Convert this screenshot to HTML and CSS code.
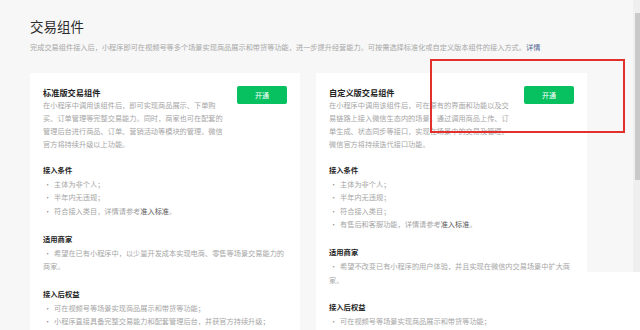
FILE: index.html
```html
<!DOCTYPE html>
<html lang="zh-CN">
<head>
  <meta charset="UTF-8" />
  <meta name="viewport" content="width=device-width, initial-scale=1.0"/>
  <title>交易组件</title>
  <link rel="stylesheet" href="styles.css">
</head>
<body>
  <div class="page">
    <h1 class="title">交易组件</h1>
    <p class="intro">完成交易组件接入后，小程序即可在视频号等多个场景实现商品展示和带货等功能，进一步提升经营能力。可按需选择标准化或自定义版本组件的接入方式。<a class="link">详情</a></p>

    <div class="cards">
      <div class="card">
        <div class="card-head">
          <div>
            <h2 class="card-title">标准版交易组件</h2>
            <p class="card-desc">在小程序中调用该组件后，即可实现商品展示、下单购买、订单管理等完整交易能力。同时，商家也可在配套的管理后台进行商品、订单、营销活动等模块的管理。微信官方将持续升级以上功能。</p>
          </div>
          <button class="btn">开通</button>
        </div>
        <div class="section">
          <h3>接入条件</h3>
          <ul>
            <li>主体为非个人；</li>
            <li>半年内无违规；</li>
            <li>符合接入类目，详情请参考<a class="link-dark">准入标准</a>。</li>
          </ul>
        </div>
        <div class="section">
          <h3>适用商家</h3>
          <ul>
            <li>希望在已有小程序中，以少量开发成本实现电商、零售等场景交易能力的商家。</li>
          </ul>
        </div>
        <div class="section">
          <h3>接入后权益</h3>
          <ul>
            <li>可在视频号等场景实现商品展示和带货等功能；</li>
            <li>小程序直接具备完整交易能力和配套管理后台，并获官方持续升级；</li>
            <li>可通过交易组件获得平台提供的营销和流量支持。</li>
          </ul>
        </div>
      </div>

      <div class="card">
        <div class="card-head">
          <div>
            <h2 class="card-title">自定义版交易组件</h2>
            <p class="card-desc">在小程序中调用该组件后，可在原有的界面和功能以及交易链路上接入微信生态内的场景，通过调用商品上传、订单生成、状态同步等接口，实现在场景中的交易及管理。微信官方将持续迭代接口功能。</p>
          </div>
          <button class="btn">开通</button>
        </div>
        <div class="section">
          <h3>接入条件</h3>
          <ul>
            <li>主体为非个人；</li>
            <li>半年内无违规；</li>
            <li>符合接入类目；</li>
            <li>有售后和客服功能，详情请参考<a class="link-dark">准入标准</a>。</li>
          </ul>
        </div>
        <div class="section">
          <h3>适用商家</h3>
          <ul>
            <li>希望不改变已有小程序的用户体验，并且实现在微信内交易场景中扩大商家。</li>
          </ul>
        </div>
        <div class="section">
          <h3>接入后权益</h3>
          <ul>
            <li>可在视频号等场景实现商品展示和带货等功能；</li>
            <li>保留原有小程序交易链路，接入后即可获得场景能力。</li>
          </ul>
        </div>
      </div>
    </div>
  </div>

  <div class="highlight"></div>
  <div class="corner"></div>
  <div class="scrollbar"><div class="thumb"></div></div>
</body>
</html>
```

FILE: styles.css
```css
html, body { margin: 0; padding: 0; height: 100%; overflow: hidden; }
body { background: #f7f7f7; font-family: "Noto Sans CJK SC", "Noto Sans", sans-serif; color: #333; }

.page { padding: 17px 30px 0 30px; }
.title { margin: 0; font-size: 13.5px; line-height: 18px; font-weight: 400; color: #2b2b2b; }
.intro { margin: 6px 0 0; font-size: 7.2px; line-height: 12px; color: #a8a8a8; white-space: nowrap; }
.link { color: #576b95; }
.link-dark { color: #555; }

.cards { display: grid; grid-template-columns: 270px 271px; gap: 16px; margin-top: 20px; }
.card { background: #fff; padding: 13px 13px 20px; height: 300px; }

.card-head { display: flex; justify-content: space-between; align-items: flex-start; }
.card-title { margin: 0; font-size: 8.2px; line-height: 13px; font-weight: 700; color: #222; }
.card-desc { margin: 0; width: 181px; font-size: 7.2px; line-height: 13px; color: #a6a6a6; }
.btn { width: 50px; height: 18px; border: none; border-radius: 2px; background: #07c160; color: #fff; font-family: inherit; font-size: 7px; padding: 0; }

.section { margin-top: 12px; }
.section + .section { margin-top: 13.5px; }
.section h3 { margin: 0; font-size: 7.3px; line-height: 15px; font-weight: 700; color: #222; }
.section ul { margin: 0; padding: 0; list-style: none; }
.section li { font-size: 7.2px; line-height: 13.4px; color: #a6a6a6; }
.section li::before { content: "•"; display: inline-block; width: 11px; padding-left: 1px; box-sizing: border-box; color: #999; }

.highlight { position: absolute; left: 430px; top: 59px; width: 191px; height: 70px; border: 2px solid #e2302d; }
.corner { position: absolute; left: 587px; top: 272px; width: 53px; height: 58px; background: #fff; }
.scrollbar { position: fixed; right: 0; top: 0; width: 7px; height: 272px; background: #efefef; }
.thumb { margin: 13px 0 0 2px; width: 5px; height: 167px; background: #c9c9c9; }
```
